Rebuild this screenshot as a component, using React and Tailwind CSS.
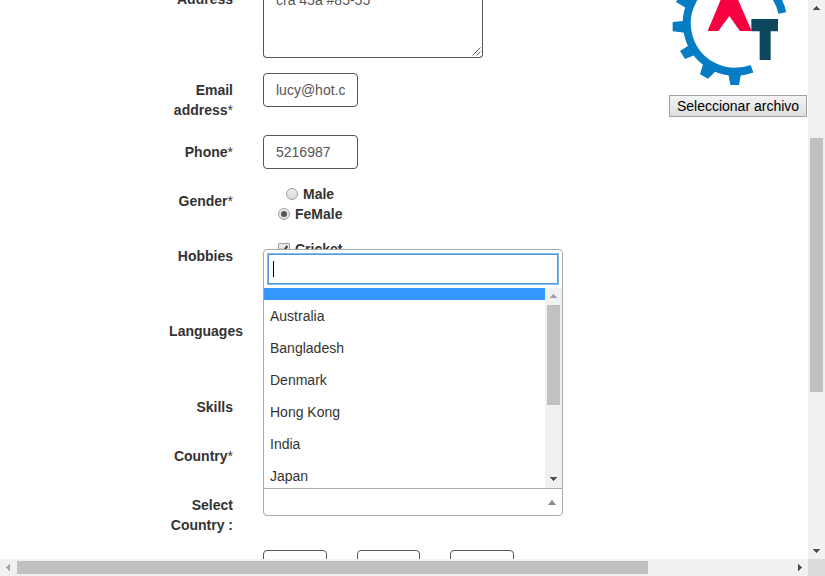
const countries = ['Australia', 'Bangladesh', 'Denmark', 'Hong Kong', 'India', 'Japan'];

function Row({ label, className, labelClass = 'w-[233px] pt-[7px]', required, children }) {
  return (
    <div className={`flex shrink-0 items-start ${className}`}>
      <div className={`shrink-0 text-right font-bold ${labelClass}`}>
        {label}
        {required && <span className="font-normal">*</span>}
      </div>
      {children}
    </div>
  );
}

// Stepped 7x7 arrows: each is drawn on whole pixels so that the edges stay sharp.
function Arrow({ d, className }) {
  return (
    <svg width="7" height="7" viewBox="0 0 7 7" className={className}>
      <path d={d} fill="currentColor" />
    </svg>
  );
}

const up = 'M3 1H4V2H5V3H6V4H7V5H0V4H1V3H2V2H3Z';
const down = 'M0 2H7V3H6V4H5V5H4V6H3V5H2V4H1V3H0Z';
const left = 'M5 0V7H4V6H3V5H2V4H1V3H2V2H3V1H4V0Z';
const right = 'M2 0V7H3V6H4V5H5V4H6V3H5V2H4V1H3V0Z';

function Radio({ checked }) {
  return (
    <span className="flex size-3 items-center justify-center rounded-full border border-[#a0a0a0] bg-gradient-to-b from-[#ededed] to-[#dcdcdc]">
      {checked && <span className="size-1.5 rounded-full bg-[#555]" />}
    </span>
  );
}

function Logo() {
  return (
    <svg width="148" height="86" viewBox="0 0 444 258" className="block shrink-0">
      <path d="M276 206A145 145 0 1 1 367 39" fill="none" stroke="#047dc5" strokeWidth="24" />
      <g fill="#047dc5">
        <path d="M205 221L211 255H237L243 221Z" />
        <path d="M75 62L38 66V94L75 98Z" />
        <path d="M87 136L60 153L75 177L110 163Z" />
        <path d="M131 186L120 223L144 236L170 211Z" />
        <path d="M78 24L48 6L58 -12L98 -8Z" />
      </g>
      <path d="M143 93L191 -22H225L275 93H240L208 48L175 93Z" fill="#f6003f" />
      <path d="M274 57H354V94H332V180H299V94H274Z" fill="#0c475e" />
    </svg>
  );
}

function CountrySelect() {
  return (
    <div className="relative ml-[30px] h-7 w-[300px] rounded-b border border-[#aaa] bg-white">
      <svg width="8" height="5" viewBox="0 0 8 5" className="absolute right-[6px] top-[11px]">
        <path d="M0 5L4 0L8 5Z" fill="#888" />
      </svg>
      <div className="absolute -left-px bottom-[26px] flex h-[240px] w-[300px] flex-col rounded-t border border-[#aaa] bg-white">
        <div className="h-[38px] shrink-0 p-1">
          <div className="flex h-[30px] items-center border border-[#5897d6] pl-[4px] shadow-[0_0_0_1px_#82bdf2]">
            <span className="h-4 w-px bg-black" />
          </div>
        </div>
        <div className="flex h-[200px] overflow-hidden">
          <div className="w-[281px]">
            <div className="h-3 bg-[#3598fe]" />
            {countries.map((name) => (
              <div key={name} className="h-8 p-1.5">{name}</div>
            ))}
          </div>
          <div className="flex w-[17px] flex-col items-center bg-[#f1f1f1]">
            <div className="flex h-[17px] shrink-0 items-center text-[#a3a3a3]"><Arrow d={up} /></div>
            <div className="h-[100px] w-[13px] shrink-0 bg-[#c1c1c1]" />
            <div className="mt-auto flex h-[19px] items-center text-[#505050]"><Arrow d={down} /></div>
          </div>
        </div>
      </div>
    </div>
  );
}

export default function App() {
  return (
    <div className="grid h-[576px] w-[825px] grid-cols-[808px_17px] grid-rows-[559px_17px] overflow-hidden bg-white font-['Liberation_Sans',Arial,sans-serif] text-sm leading-5 text-[#333]">
      <main className="flex overflow-hidden">
        <form className="flex w-[660px] shrink-0 flex-col">
          <Row label="Address" className="h-[73px]" labelClass="w-[233px] -mt-[11px]">
            <div className="relative ml-[30px] h-[58px] w-[220px] rounded-b border border-t-0 border-[#555] pl-3 text-[#555]">
              <div className="-mt-[10px]">cra 45a #85-55</div>
              <svg width="9" height="9" viewBox="0 0 9 9" className="absolute bottom-px right-px">
                <path d="M.5 8.5L8.5 .5M4.5 8.5L8.5 4.5" stroke="#555" fill="none" strokeWidth=".9" />
              </svg>
            </div>
          </Row>
          <Row label={<>Email<br />address</>} required className="h-[62px]">
            <div className="ml-[30px] h-[34px] w-[95px] overflow-hidden rounded border border-[#555] px-3 py-1.5 text-[#555]">
              <div className="overflow-hidden whitespace-nowrap">lucy@hot.c</div>
            </div>
          </Row>
          <Row label="Phone" required className="h-[49px]">
            <div className="ml-[30px] h-[34px] w-[95px] rounded border border-[#555] px-3 py-1.5 text-[#555]">5216987</div>
          </Row>
          <Row label="Gender" required className="h-[55px]">
            <div className="ml-[45px] font-bold">
              <div className="flex items-center gap-[5px] pl-2"><Radio />Male</div>
              <div className="flex items-center gap-[5px]"><Radio checked />FeMale</div>
            </div>
          </Row>
          <Row label="Hobbies" className="h-[75px]">
            <div className="ml-[45px] flex items-center gap-[5px] font-bold">
              <span className="flex size-3 items-center justify-center rounded-[1px] border border-[#a0a0a0] bg-[#e8e8e8]">
                <svg width="10" height="10" viewBox="0 0 10 10">
                  <path d="M1.5 5L4 7.5L8.5 2" fill="none" stroke="#444" strokeWidth="2" />
                </svg>
              </span>
              Cricket
            </div>
          </Row>
          <Row label="Languages" className="h-[76px]" labelClass="w-[243px] pt-[7px]" />
          <Row label="Skills" className="h-[49px]" />
          <Row label="Country" required className="h-[49px]" />
          <Row label={<>Select<br />Country :</>} className="h-[62px]">
            <CountrySelect />
          </Row>
          <div className="ml-[263px] flex gap-[30px]">
            <div className="h-[34px] w-16 rounded border border-[#555]" />
            <div className="h-[34px] w-[63px] rounded border border-[#555]" />
            <div className="h-[34px] w-16 rounded border border-[#555]" />
          </div>
        </form>
        <aside className="flex w-[148px] flex-col">
          <Logo />
          <button type="button" className="ml-[9px] mt-[9px] h-[22px] w-[138px] whitespace-nowrap border border-[#a0a0a0] bg-gradient-to-b from-[#f4f4f4] to-[#dedede] text-center text-sm leading-5 text-black">
            Seleccionar archivo
          </button>
        </aside>
      </main>
      <div className="flex flex-col items-center bg-[#f1f1f1] text-[#505050]">
        <div className="flex h-[17px] items-center"><Arrow d={up} /></div>
        <div className="mt-[121px] h-[254px] w-[13px] bg-[#c1c1c1]" />
        <div className="mt-auto flex h-[17px] items-center"><Arrow d={down} /></div>
      </div>
      <div className="flex items-center bg-[#f1f1f1] text-[#505050]">
        <div className="flex w-[17px] justify-center text-[#a3a3a3]"><Arrow d={left} /></div>
        <div className="h-[13px] w-[631px] bg-[#c1c1c1]" />
        <div className="ml-auto flex w-[17px] justify-center"><Arrow d={right} /></div>
      </div>
      <div className="bg-[#dcdcdc]" />
    </div>
  );
}
